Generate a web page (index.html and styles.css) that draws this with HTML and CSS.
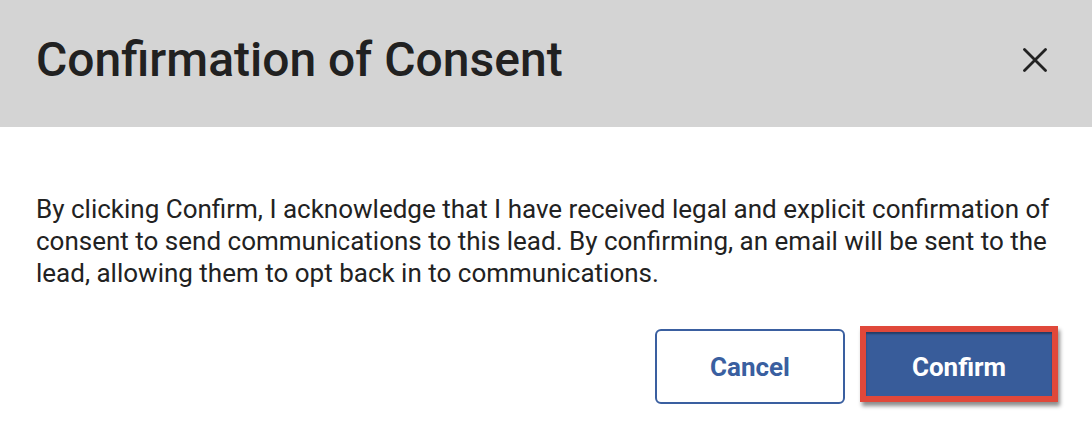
FILE: index.html
```html
<!DOCTYPE html>
<html>
<head>
<meta charset="utf-8">
<link rel="stylesheet" href="styles.css">
</head>
<body>
<div class="modal">
  <header class="modal-header">
    <h1 class="title">Confirmation of Consent</h1>
    <button class="close" aria-label="Close">
      <svg width="24" height="24" viewBox="0 0 24 24"><path d="M1.5 1.5 L22.5 22.5 M22.5 1.5 L1.5 22.5" stroke="#222" stroke-width="2.8" stroke-linecap="round" fill="none"/></svg>
    </button>
  </header>
  <div class="modal-body">
    <p class="message">By clicking Confirm, I acknowledge that I have received legal and explicit confirmation of consent to send communications to this lead. By confirming, an email will be sent to the lead, allowing them to opt back in to communications.</p>
  </div>
  <footer class="modal-footer">
    <button class="btn btn-outline">Cancel</button>
    <div class="highlight"><button class="btn btn-primary">Confirm</button></div>
  </footer>
</div>
</body>
</html>
```
FILE: styles.css
```css
html, body { margin: 0; padding: 0; background: #fff; }
body { font-family: Roboto, "Noto Sans", sans-serif; width: 1092px; height: 444px; overflow: hidden; }
.modal { display: flex; flex-direction: column; }
.modal-header {
  background: #d4d4d4; height: 127px; box-sizing: border-box;
  display: flex; align-items: center; justify-content: space-between;
  padding: 0 45px 8px 36px;
}
.title { margin: 0; font-size: 48px; font-weight: 500; color: #212121; line-height: 56px; }
.close { background: none; border: 0; padding: 0; width: 24px; height: 24px; display: flex; cursor: pointer; }
.modal-body { padding: 66px 36px 0 36px; }
.message { margin: 0; font-size: 26px; line-height: 32px; color: #222; }
.modal-footer { display: flex; justify-content: flex-end; align-items: flex-start; gap: 15px; padding: 37px 34px 0 0; }
.btn { font-family: Roboto, sans-serif; font-weight: 700; font-size: 26px; cursor: pointer; }
.btn-outline { width: 190px; height: 75px; margin-top: 3px; background: #fff; border: 2px solid #3a5fa0; border-radius: 6px; color: #3a5fa0; }
.highlight { border: 6px solid #e0483a; box-shadow: 2px 4px 4px rgba(0,0,0,0.45); }
.btn-primary { display: block; width: 186px; height: 64px; padding: 5px 0 0 0; background: #385c9a; border: 0; color: #fff; box-shadow: inset 0 2px 2px rgba(0,0,0,0.35); }
```
